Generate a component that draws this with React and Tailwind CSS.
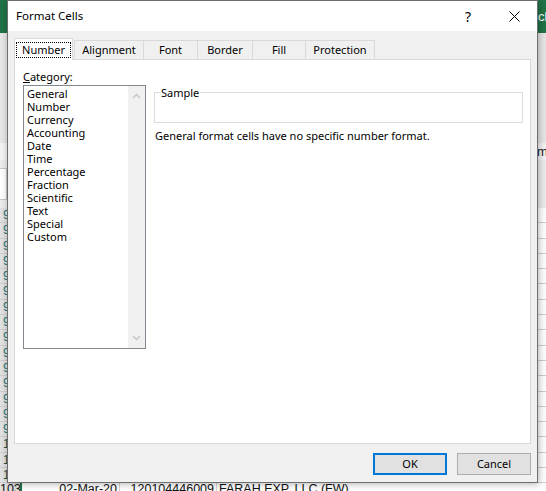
import React from "react";

const categories = [
  "General",
  "Number",
  "Currency",
  "Accounting",
  "Date",
  "Time",
  "Percentage",
  "Fraction",
  "Scientific",
  "Text",
  "Special",
  "Custom",
];

const tabs = [
  { label: "Alignment", w: "w-[69px]" },
  { label: "Font", w: "w-[54px]" },
  { label: "Border", w: "w-[55px]" },
  { label: "Fill", w: "w-[53px]" },
  { label: "Protection", w: "w-[70px]" },
];

// sheet rows peeking out around the dialog
const rows = Array.from({ length: 18 }, (_, i) => (i < 15 ? "9" : "1"));

function Chevron({ up }) {
  return (
    <svg width="9" height="6" viewBox="0 0 9 6" className="block">
      <polyline
        points={up ? "1,5 4.5,1.5 8,5" : "1,1 4.5,4.5 8,1"}
        fill="none"
        stroke="#c4c4c4"
        strokeWidth="1.4"
      />
    </svg>
  );
}

function Background() {
  return (
    <div className="font-['Liberation_Sans',sans-serif]">
      <div className="flex h-[33px] items-center overflow-hidden bg-[#217346] pl-[538px] text-[13px] whitespace-nowrap text-white">
        ck
      </div>
      <div className="h-[110px] bg-[#e6e6e6]" />
      <div className="flex h-[17px] items-center overflow-hidden bg-[#f3f3f3] pl-[537px] text-[13px] text-[#222]">
        m
      </div>
      <div className="flex h-[48px] bg-[#ececec] pt-[8px]">
        <div className="h-[32px] w-[7px] border border-l-0 border-[#c6c6c6] bg-white" />
      </div>
      <div>
        {rows.map((r, i) => (
          <div
            key={i}
            className="flex h-[15.3px] border-b border-[#cfcfcf] bg-white text-[12px] leading-[14px]"
          >
            <div
              className={`w-[7px] overflow-hidden bg-[#e1e1e1] pl-[3px] ${
                i < 15 ? "text-[#2a7575]" : "text-[#1d4f3f]"
              }`}
            >
              {r}
            </div>
          </div>
        ))}
      </div>
      <div className="flex h-[20px] bg-white text-[12.5px] leading-[12px] text-[#111]">
        <div className="w-[20px] bg-[#e1e1e1]">103</div>
        <div className="w-[2px] bg-[#217346]" />
        <div className="w-[98px] border-r border-[#d4d4d4] pr-[2px] text-right">02-Mar-20</div>
        <div className="w-[97px] border-r border-[#d4d4d4] pr-[2px] text-right">120104446009</div>
        <div className="pl-[2px] whitespace-nowrap">FARAH EXP. LLC (FW)</div>
      </div>
    </div>
  );
}

export default function App() {
  return (
    <div className="relative h-[491px] w-[546px] overflow-hidden bg-white">
      <Background />

      {/* Format Cells dialog */}
      <div className="absolute top-0 left-[7px] flex h-[483px] w-[531px] flex-col border border-[#6f6f6f] bg-[#f0f0f0] font-['Noto_Sans',sans-serif] text-[11px] text-black shadow-[1px_1px_7px_rgba(0,0,0,0.3)]">
        <div className="flex h-[30px] items-center bg-white">
          <div className="flex-1 pl-[8px] text-[11.5px]">Format Cells</div>
          <div className="flex h-full w-[46px] items-center justify-center text-[14px]">?</div>
          <div className="flex h-full w-[46px] items-center justify-center">
            <svg width="11" height="11" viewBox="0 0 11 11">
              <path d="M0.5 0.5 L10.5 10.5 M10.5 0.5 L0.5 10.5" stroke="#000" strokeWidth="1" />
            </svg>
          </div>
        </div>

        <div className="flex flex-1 flex-col px-[6px] pt-[7px]">
          {/* tabs */}
          <div className="flex h-[21px] items-end">
            <div className="relative z-10 -mb-px flex h-[22px] w-[59px] items-center justify-center border border-b-0 border-[#d9d9d9] bg-white">
              <span className="border border-dotted border-black px-[5px] leading-[14px]">Number</span>
            </div>
            {tabs.map((t, i) => (
              <div
                key={t.label}
                className={`flex h-[19px] ${t.w} items-center justify-center border-t border-l border-[#d9d9d9] ${
                  i === 0 ? "ml-px" : ""
                } ${i === tabs.length - 1 ? "border-r" : ""}`}
              >
                {t.label}
              </div>
            ))}
          </div>

          {/* panel */}
          <div className="flex h-[385px] border border-[#d9d9d9] bg-white pl-[8px] pr-[7px]">
            <div className="flex flex-col pt-[10px]">
              <div className="leading-[14px]">
                <span className="underline">C</span>ategory:
              </div>
              <div className="mt-px flex h-[264px] w-[123px] border border-[#828790]">
                <div className="flex-1 pt-[1px] pl-[3px] leading-[13px]">
                  {categories.map((c) => (
                    <div key={c}>{c}</div>
                  ))}
                </div>
                <div className="flex w-[17px] flex-col items-center justify-between bg-[#f0f0f0] pt-[7px] pb-[7px]">
                  <Chevron up />
                  <Chevron />
                </div>
              </div>
            </div>

            <div className="ml-[8px] flex flex-1 flex-col pt-[32px]">
              <div className="relative h-[31px] border border-[#dcdcdc]">
                <span className="absolute -top-[7px] left-[5px] bg-white px-px leading-[14px]">Sample</span>
              </div>
              <div className="mt-[6px] pl-px leading-[14px]">
                General format cells have no specific number format.
              </div>
            </div>
          </div>

          {/* buttons */}
          <div className="mt-[9px] flex justify-end gap-[10px]">
            <button className="h-[22px] w-[74px] border-2 border-[#0078d7] bg-[#e1e1e1] text-[11px]">OK</button>
            <button className="h-[22px] w-[74px] border border-[#adadad] bg-[#e1e1e1] text-[11px]">Cancel</button>
          </div>
        </div>
      </div>
    </div>
  );
}
